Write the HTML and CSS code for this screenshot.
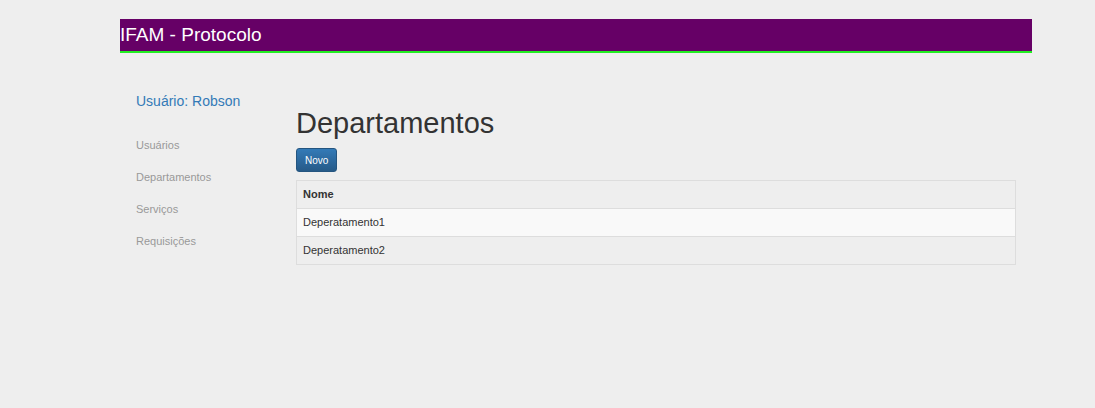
FILE: index.html
```html
<!DOCTYPE html>
<html lang="pt">
<head>
<meta charset="utf-8">
<title>IFAM - Protocolo</title>
<link rel="stylesheet" href="styles.css">
</head>
<body>
<div class="page">
  <header class="topbar">IFAM - Protocolo</header>
  <div class="layout">
    <aside class="sidebar">
      <div class="user">Usuário: Robson</div>
      <ul class="nav">
        <li>Usuários</li>
        <li>Departamentos</li>
        <li>Serviços</li>
        <li>Requisições</li>
      </ul>
    </aside>
    <main class="main">
      <h1 class="title">Departamentos</h1>
      <button class="btn">Novo</button>
      <table class="table">
        <thead><tr><th>Nome</th></tr></thead>
        <tbody>
          <tr class="odd"><td>Deperatamento1</td></tr>
          <tr><td>Deperatamento2</td></tr>
        </tbody>
      </table>
    </main>
  </div>
</div>
</body>
</html>
```
FILE: styles.css
```css
html, body {
  margin: 0;
  padding: 0;
  background: #eeeeee;
  font-family: "Liberation Sans", Arial, sans-serif;
  color: #333;
}
.page {
  width: 912px;
  margin-left: 120px;
  padding-top: 19px;
}
.topbar {
  background: #660066;
  color: #fff;
  font-size: 19px;
  line-height: 31px;
  border-bottom: 2px solid #22ee22;
  box-sizing: border-box;
  height: 34px;
}
.layout {
  display: grid;
  grid-template-columns: 160px 720px;
  padding: 0 16px;
}
.sidebar {
  padding-top: 40px;
}
.user {
  color: #337ab7;
  font-size: 14px;
  line-height: 16px;
}
.nav {
  list-style: none;
  margin: 28px 0 0;
  padding: 0;
}
.nav li {
  font-size: 11px;
  color: #999;
  height: 32px;
  line-height: 16px;
}
.main {
  padding-top: 54px;
}
.title {
  font-size: 29px;
  font-weight: 500;
  line-height: 32px;
  margin: 0 0 9px;
  color: #333;
}
.btn {
  display: block;
  font-family: inherit;
  font-size: 10px;
  color: #fff;
  height: 24px;
  padding: 0 8px;
  border: 1px solid #245580;
  border-radius: 3px;
  background: linear-gradient(to bottom, #337ab7, #265a88);
  margin-bottom: 8px;
}
.table {
  width: 100%;
  border-collapse: collapse;
  border: 1px solid #dddddd;
  font-size: 11px;
}
.table th, .table td {
  text-align: left;
  padding: 0 6px 1px;
  height: 26px;
  border-top: 1px solid #dddddd;
}
.table th {
  font-weight: bold;
}
.table tr.odd td {
  background: #f9f9f9;
}
```
